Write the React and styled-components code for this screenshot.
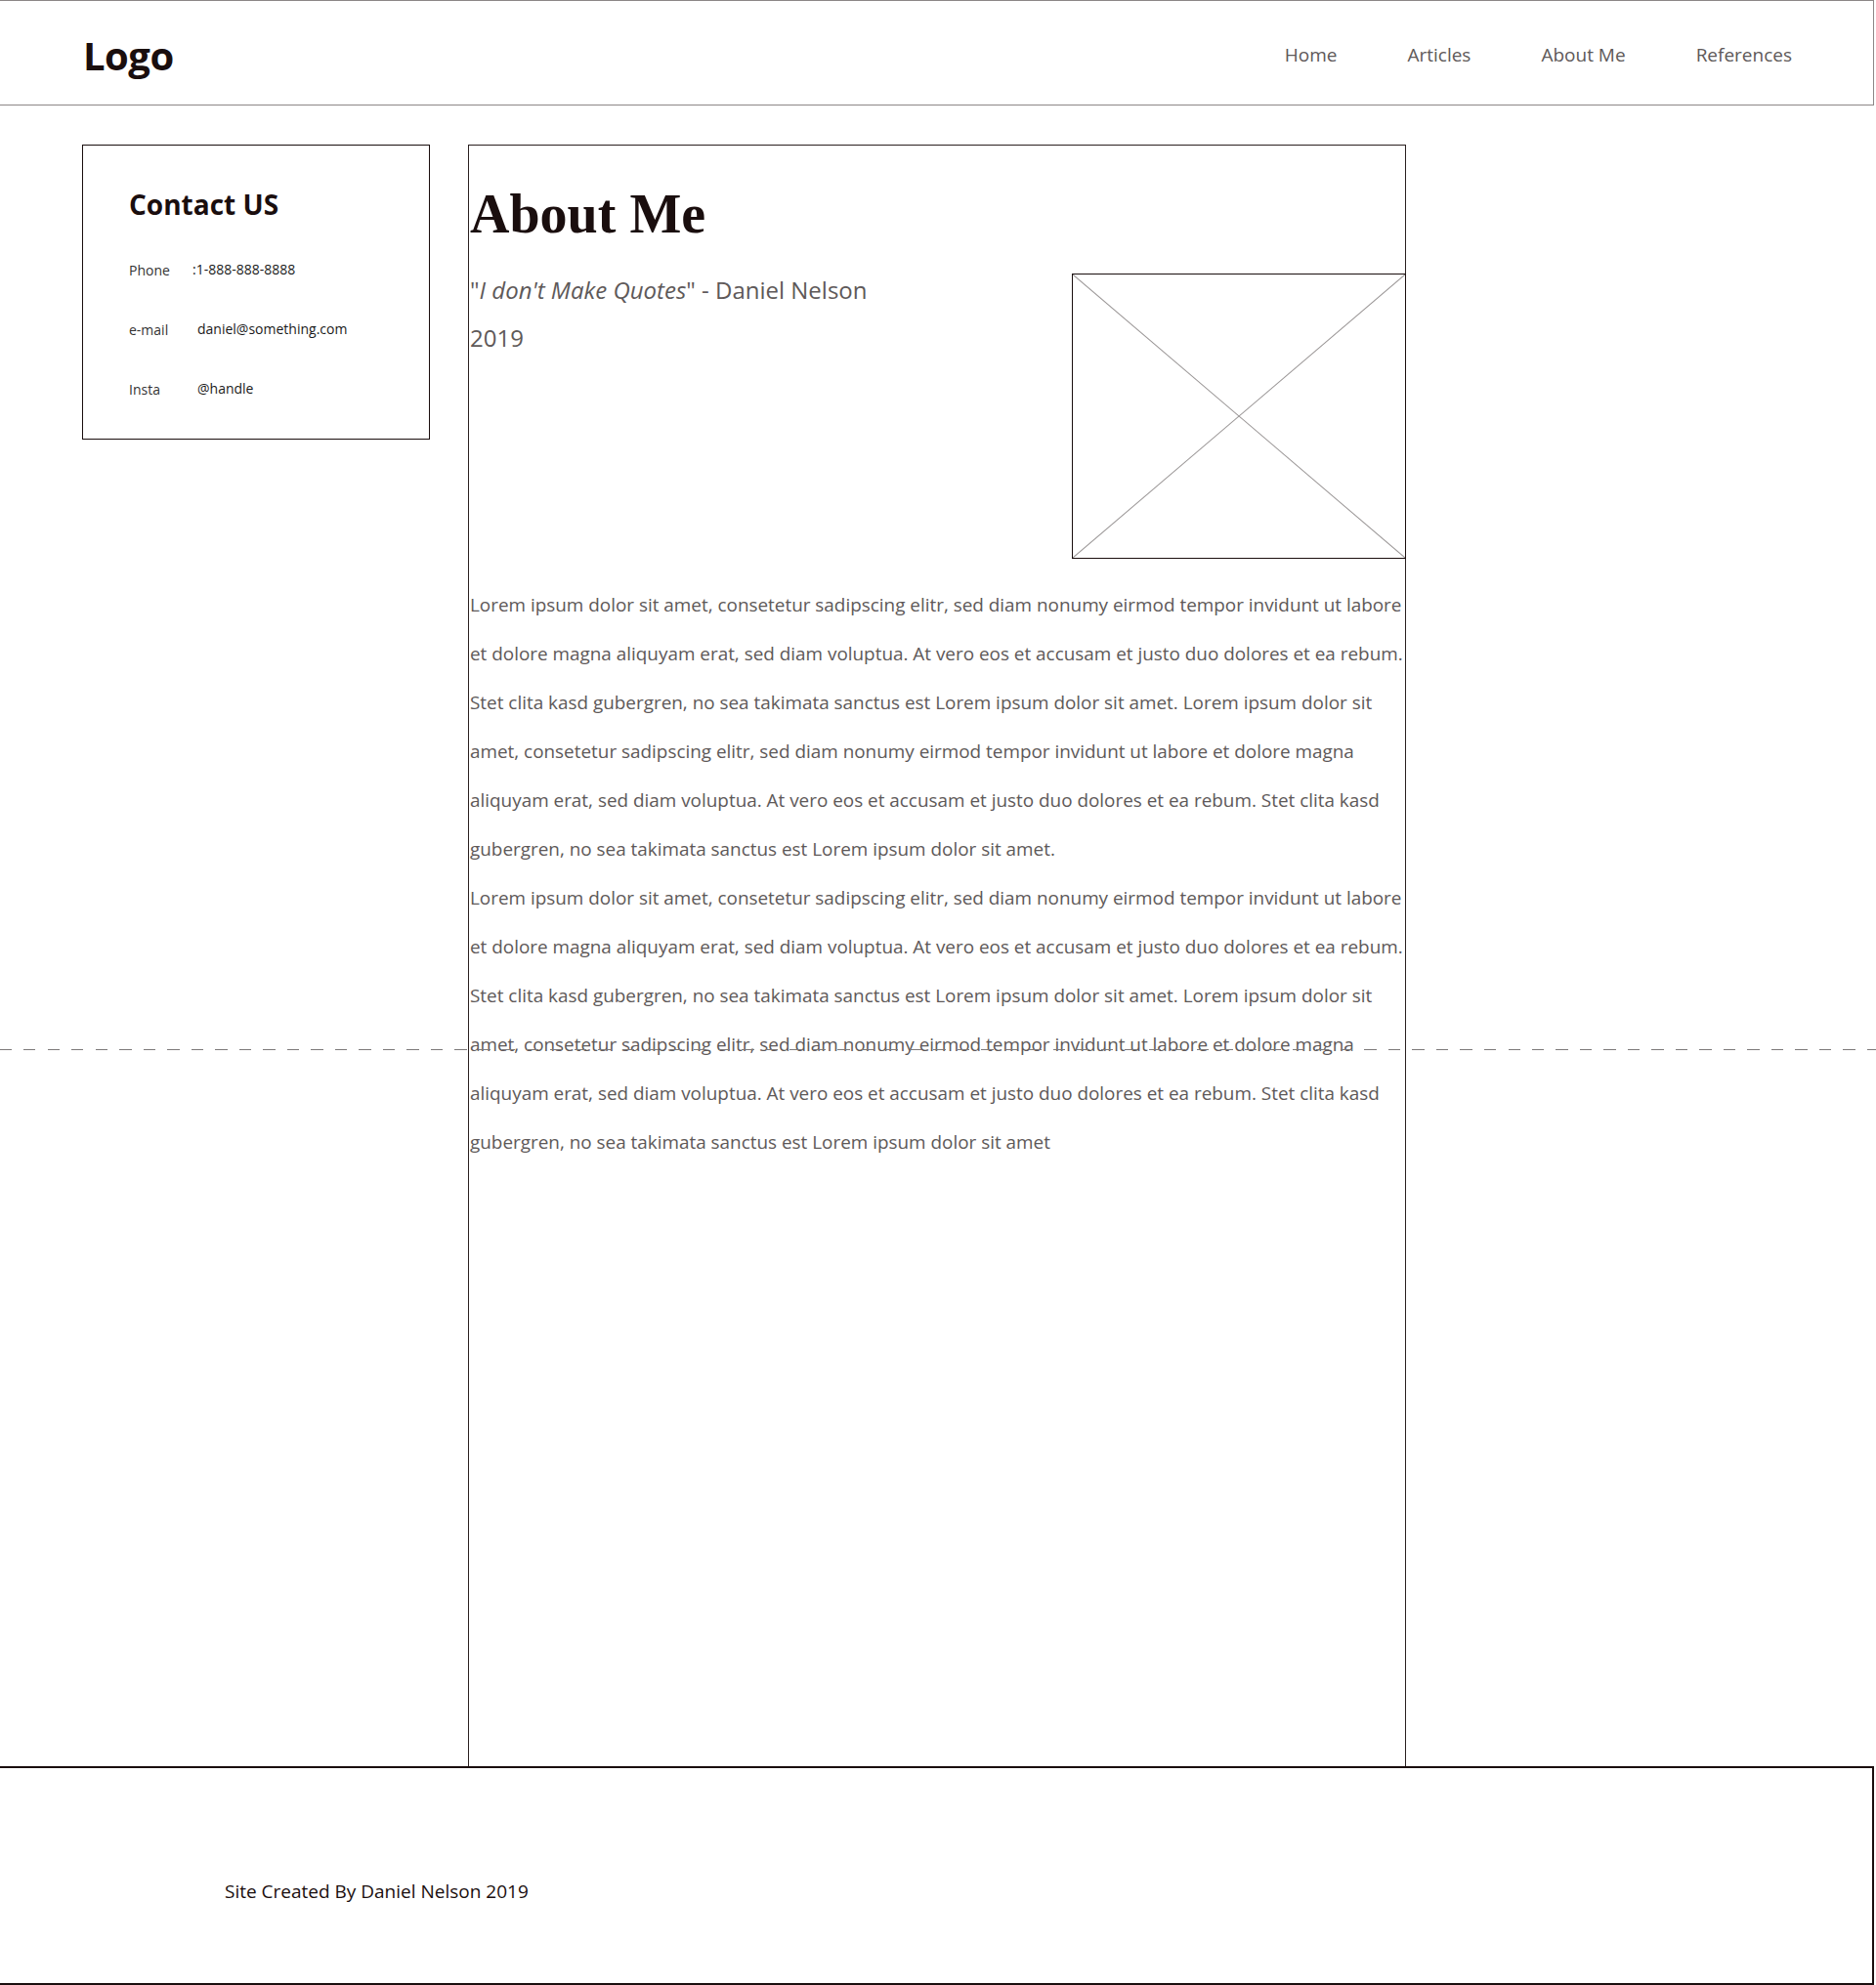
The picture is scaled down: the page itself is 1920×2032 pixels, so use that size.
import React from "react";
import styled, { createGlobalStyle } from "styled-components";

const GlobalStyle = createGlobalStyle`
  body {
    margin: 0;
    background: #ffffff;
    font-family: "Open Sans", "Noto Sans", sans-serif;
  }
`;

const Page = styled.div`
  position: relative;
  width: 1918px;
  min-height: 2032px;
`;

const Header = styled.header`
  box-sizing: border-box;
  height: 108px;
  border: 1px solid #8c8787;
  border-left: none;
  display: flex;
  align-items: center;
  justify-content: space-between;
  padding: 4px 83px 0 85px;
`;

const Logo = styled.div`
  font-size: 40px;
  font-weight: 700;
  color: #1a0e0e;
  letter-spacing: -0.5px;
`;

const Nav = styled.nav`
  display: flex;
  gap: 72px;
`;

const NavLink = styled.a`
  font-size: 19px;
  color: #5e5959;
  text-decoration: none;
`;

const Body = styled.div`
  display: flex;
  align-items: flex-start;
  gap: 39px;
  padding: 40px 0 0 84px;
`;

const ContactCard = styled.aside`
  box-sizing: border-box;
  width: 356px;
  height: 302px;
  border: 1px solid #1a0e0e;
  padding: 43px 0 0 47px;
`;

const CardTitle = styled.h2`
  margin: 0 0 41px;
  font-size: 28px;
  line-height: 34px;
  font-weight: 700;
  color: #1a0e0e;
`;

const ContactList = styled.div`
  display: flex;
  flex-direction: column;
  gap: 41px;
`;

const ContactRow = styled.div`
  display: grid;
  grid-template-columns: 70px auto;
  font-size: 14px;
  line-height: 20px;
`;

const Label = styled.span`
  color: #333333;
`;

const Value = styled.span`
  color: #1a1a1a;
  margin-left: ${(props) => props.shift || 0}px;
  transform: translateY(-1px);
`;

const Main = styled.main`
  box-sizing: border-box;
  width: 960px;
  min-height: 1660px;
  border: 1px solid #2a2020;
  border-bottom: none;
  padding: 38px 0 0 1px;
`;

const Title = styled.h1`
  margin: 0;
  font-family: "Liberation Serif", "Times New Roman", serif;
  font-size: 56px;
  line-height: 64px;
  font-weight: 700;
  color: #1a0e0e;
`;

const Intro = styled.div`
  display: flex;
  justify-content: space-between;
  align-items: flex-start;
  margin-top: 18px;
`;

const QuoteBlock = styled.div`
  margin-top: 3px;
  font-size: 24px;
  line-height: 49px;
  color: #5e5959;
`;

const Line = styled.div`
  white-space: nowrap;
`;

const Placeholder = styled.div`
  box-sizing: border-box;
  width: 342px;
  height: 292px;
  margin-top: 11px;
  margin-right: -1px;
  border: 1px solid #1a0e0e;

  svg {
    display: block;
    width: 100%;
    height: 100%;
  }
`;

const TextGroup = styled.div`
  margin-top: 22px;
`;

const Text = styled.p`
  margin: 0;
  font-size: 18.9px;
  line-height: 50px;
  color: #5e5959;
`;

const Footer = styled.footer`
  box-sizing: border-box;
  height: 224px;
  border: 2px solid #1a0e0e;
  border-left: none;
  padding: 114px 0 0 230px;
  font-size: 19px;
  line-height: 24px;
  color: #1a0e0e;
`;

const FoldLine = styled.div`
  position: absolute;
  top: 1074px;
  left: 0;
  width: 1920px;
  height: 1px;
  background: repeating-linear-gradient(
    90deg,
    #7d7a7a 0 12px,
    transparent 12px 24.5px
  );
  pointer-events: none;
`;

// lines broken the same way as the mockup
const paragraphs = [
  [
    "Lorem ipsum dolor sit amet, consetetur sadipscing elitr, sed diam nonumy eirmod tempor invidunt ut labore",
    "et dolore magna aliquyam erat, sed diam voluptua. At vero eos et accusam et justo duo dolores et ea rebum.",
    "Stet clita kasd gubergren, no sea takimata sanctus est Lorem ipsum dolor sit amet. Lorem ipsum dolor sit",
    "amet, consetetur sadipscing elitr, sed diam nonumy eirmod tempor invidunt ut labore et dolore magna",
    "aliquyam erat, sed diam voluptua. At vero eos et accusam et justo duo dolores et ea rebum. Stet clita kasd",
    "gubergren, no sea takimata sanctus est Lorem ipsum dolor sit amet.",
  ],
  [
    "Lorem ipsum dolor sit amet, consetetur sadipscing elitr, sed diam nonumy eirmod tempor invidunt ut labore",
    "et dolore magna aliquyam erat, sed diam voluptua. At vero eos et accusam et justo duo dolores et ea rebum.",
    "Stet clita kasd gubergren, no sea takimata sanctus est Lorem ipsum dolor sit amet. Lorem ipsum dolor sit",
    "amet, consetetur sadipscing elitr, sed diam nonumy eirmod tempor invidunt ut labore et dolore magna",
    "aliquyam erat, sed diam voluptua. At vero eos et accusam et justo duo dolores et ea rebum. Stet clita kasd",
    "gubergren, no sea takimata sanctus est Lorem ipsum dolor sit amet",
  ],
];

const contacts = [
  { label: "Phone", value: ":1-888-888-8888", shift: -5 },
  { label: "e-mail", value: "daniel@something.com" },
  { label: "Insta", value: "@handle" },
];

const navItems = ["Home", "Articles", "About Me", "References"];

const App = () => {
  return (
    <Page>
      <GlobalStyle />
      <Header>
        <Logo>Logo</Logo>
        <Nav>
          {navItems.map((item) => (
            <NavLink key={item} href="#">
              {item}
            </NavLink>
          ))}
        </Nav>
      </Header>

      <Body>
        <ContactCard>
          <CardTitle>Contact US</CardTitle>
          <ContactList>
            {contacts.map((c) => (
              <ContactRow key={c.label}>
                <Label>{c.label}</Label>
                <Value shift={c.shift}>{c.value}</Value>
              </ContactRow>
            ))}
          </ContactList>
        </ContactCard>

        <Main>
          <Title>About Me</Title>
          <Intro>
            <QuoteBlock>
              <Line>
                "<em>I don't Make Quotes</em>" - Daniel Nelson
              </Line>
              <Line>2019</Line>
            </QuoteBlock>
            <Placeholder>
              <svg viewBox="0 0 100 100" preserveAspectRatio="none">
                <line x1="0" y1="0" x2="100" y2="100" stroke="#9a9696" strokeWidth="1" vectorEffect="non-scaling-stroke" />
                <line x1="100" y1="0" x2="0" y2="100" stroke="#9a9696" strokeWidth="1" vectorEffect="non-scaling-stroke" />
              </svg>
            </Placeholder>
          </Intro>
          <TextGroup>
            {paragraphs.map((lines, i) => (
              <Text key={i}>
                {lines.map((l, j) => (
                  <Line key={j}>{l}</Line>
                ))}
              </Text>
            ))}
          </TextGroup>
        </Main>
      </Body>

      <Footer>Site Created By Daniel Nelson 2019</Footer>
      <FoldLine />
    </Page>
  );
};

export default App;
